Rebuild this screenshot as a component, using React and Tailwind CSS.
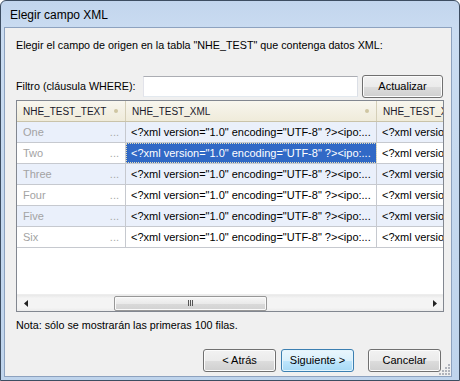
const rows = ['One', 'Two', 'Three', 'Four', 'Five', 'Six']
const xml = '<?xml version="1.0" encoding="UTF-8" ?><ipo:...'

function Button({ children, primary, className = '' }) {
  return (
    <div
      className={
        'h-[23px] w-[73px] rounded-[3px] border flex items-center justify-center text-[11px] text-black ' +
        (primary
          ? 'border-[#3c7fb1] bg-[linear-gradient(#eaf6fd_0%,#d9f0fc_50%,#bee6fd_51%,#a7d9f5_100%)] shadow-[inset_0_0_0_1px_#e4f5fd]'
          : 'border-[#707070] bg-[linear-gradient(#f2f2f2_0%,#ebebeb_50%,#dddddd_51%,#cfcfcf_100%)] shadow-[inset_0_0_0_1px_#fcfcfc]') +
        ' ' +
        className
      }
    >
      {children}
    </div>
  )
}

function HeaderCell({ label, width, dot }) {
  return (
    <div
      className="h-full shrink-0 flex items-center pl-[6px] pr-[7px] border-r border-[#d5cfb8] overflow-hidden"
      style={{ width }}
    >
      <span className="flex-1 whitespace-nowrap overflow-hidden">{label}</span>
      {dot && <span className="w-[4px] h-[4px] rounded-full bg-[#cfc6a2] shrink-0" />}
    </div>
  )
}

export default function App() {
  return (
    <div className="w-[460px] h-[381px] relative flex flex-col overflow-hidden rounded-t-[6px] border border-[#3d4d61] bg-[linear-gradient(#c2d5ed,#cadcf1_30px,#bfd4ec)] font-['Liberation_Sans',sans-serif] text-[10.75px] text-black">
      {/* title bar */}
      <div className="h-[26px] shrink-0 flex items-center pl-[9px] pt-[2px] text-[12px]">
        Elegir campo XML
      </div>

      {/* client area */}
      <div className="flex-1 ml-[3px] mr-[7px] mb-[3px] border border-[#8da2bf] bg-[#f0f0f0] flex flex-col pl-[11px] pr-[7px] relative">
        <div className="mt-[10px] h-[14px] leading-[14px]">
          Elegir el campo de origen en la tabla "NHE_TEST" que contenga datos XML:
        </div>

        <div className="mt-[23px] h-[22px] flex items-center">
          <span className="w-[127px] shrink-0">Filtro (cláusula WHERE):</span>
          <div className="h-[21px] w-[215px] bg-white border border-[#abadb3] border-b-[#e3e9ef] border-l-[#e2e3ea] border-r-[#dbdfe6]" />
          <Button className="ml-[4px] w-[81px]">Actualizar</Button>
        </div>

        {/* grid */}
        <div className="mt-[3px] h-[212px] w-[428px] border border-[#828790] bg-white flex flex-col overflow-hidden text-[11px]">
          <div className="h-[21px] shrink-0 flex bg-[linear-gradient(#f8f6ee,#efebda)] border-b border-[#c9c3aa] text-[#1a1a2a] text-[10px]">
            <HeaderCell label="NHE_TEST_TEXT" width={109} dot />
            <HeaderCell label="NHE_TEST_XML" width={251} dot />
            <HeaderCell label="NHE_TEST_XML" width={80} />
          </div>
          {rows.map((r, i) => {
            const alt = i % 2 === 0
            const sel = i === 1
            return (
              <div
                key={r}
                className={'h-[21px] shrink-0 flex border-b border-[#c6c9cf] ' + (alt ? 'bg-[#eaf0fb]' : 'bg-white')}
              >
                <div className="w-[109px] shrink-0 flex items-center pl-[6px] pr-[6px] border-r border-[#c6c9cf] text-[#a3a3a3]">
                  <span className="flex-1">{r}</span>
                  <span className="text-[#a8a8a8]">...</span>
                </div>
                <div
                  className={
                    'w-[251px] shrink-0 flex items-center pl-[5px] border-r whitespace-nowrap ' +
                    (sel
                      ? 'bg-[#3169c6] text-white border-[#c6c9cf] outline-1 outline-dotted outline-[#e8e0b8] -outline-offset-1'
                      : 'border-[#c6c9cf]')
                  }
                >
                  {xml}
                </div>
                <div className="w-[80px] shrink-0 flex items-center pl-[5px] whitespace-nowrap overflow-hidden">
                  {xml}
                </div>
              </div>
            )
          })}
          <div className="flex-1" />
          {/* horizontal scrollbar */}
          <div className="h-[17px] shrink-0 flex items-center bg-[linear-gradient(#e8e8e8,#f4f4f4_20%,#f4f4f4_80%,#ebebeb)] border-t border-[#ededed]">
            <div className="w-[17px] h-full flex items-center justify-center">
              <svg width="4" height="7" viewBox="0 0 4 7"><path d="M4 0 L0 3.5 L4 7 Z" fill="#222" /></svg>
            </div>
            <div className="w-[80px]" />
            <div className="w-[153px] h-[15px] rounded-[2px] border border-[#979797] bg-[linear-gradient(#f6f6f6,#eaeaea_50%,#dadada_51%,#d2d2d2)] shadow-[inset_0_0_0_1px_#fafafa] flex items-center justify-center gap-[1px]">
              <span className="w-[1px] h-[6px] bg-[#555]" />
              <span className="w-[1px] h-[6px] bg-[#555]" />
              <span className="w-[1px] h-[6px] bg-[#555]" />
            </div>
            <div className="flex-1" />
            <div className="w-[17px] h-full flex items-center justify-center">
              <svg width="4" height="7" viewBox="0 0 4 7"><path d="M0 0 L4 3.5 L0 7 Z" fill="#222" /></svg>
            </div>
          </div>
        </div>

        <div className="mt-[6px] h-[14px] leading-[14px]">Nota: sólo se mostrarán las primeras 100 filas.</div>

        <div className="mt-[17px] flex justify-end pr-[3px]">
          <Button>&lt; Atrás</Button>
          <Button primary className="ml-[5px]">Siguiente &gt;</Button>
          <Button className="ml-[14px]">Cancelar</Button>
        </div>

        {/* size grip */}
        <svg className="absolute right-[1px] bottom-[1px]" width="11" height="11" viewBox="0 0 11 11">
          {[
            [9, 1], [9, 4], [6, 4], [9, 7], [6, 7], [3, 7], [9, 10], [6, 10], [3, 10], [0, 10],
          ].map(([x, y], k) => (
            <rect key={k} x={x} y={y - 1} width="2" height="2" fill="#b0b4bc" />
          ))}
        </svg>
      </div>
    </div>
  )
}
